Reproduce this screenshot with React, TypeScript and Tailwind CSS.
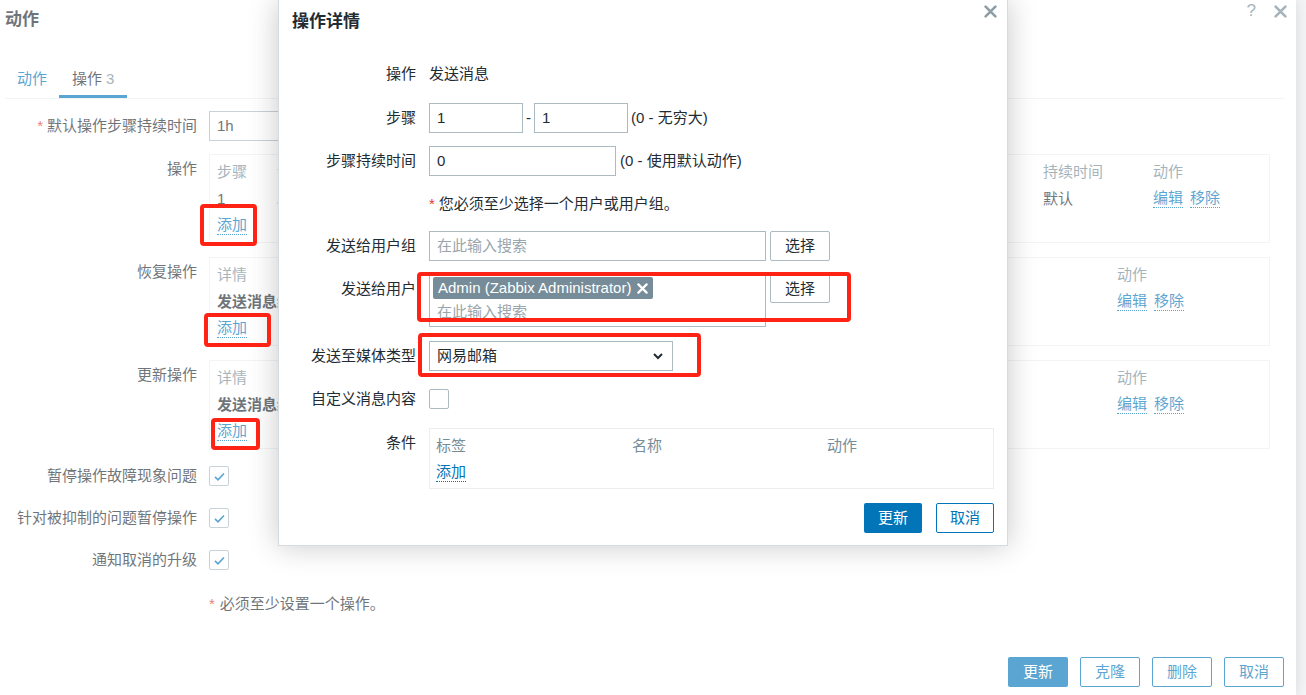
import React from "react";

const Link = ({ children }: { children: React.ReactNode }) => (
  <span className="text-[#0275b8] border-b border-dotted border-[#0275b8] leading-[18px]">{children}</span>
);

const Check = () => (
  <svg viewBox="0 0 20 20" className="w-[15px] h-[15px]">
    <path d="M4 10.5l4 3.8 8-8.3" fill="none" stroke="#0275b8" strokeWidth="2.2" />
  </svg>
);

const Box = ({ checked }: { checked?: boolean }) => (
  <div className="w-[20px] h-[20px] border border-[#acbbc2] rounded-[2px] bg-white flex items-center justify-center">
    {checked && <Check />}
  </div>
);

const Cross = ({ size, color, width }: { size: number; color: string; width: number }) => (
  <svg viewBox="0 0 12 12" width={size} height={size}>
    <path d="M1.5 1.5l9 9M10.5 1.5l-9 9" stroke={color} strokeWidth={width} strokeLinecap="round" />
  </svg>
);

const Red = ({ className }: { className: string }) => (
  <div className={"absolute border-[4px] border-[#ff2316] rounded-[4px] " + className} />
);

const BgRow = ({ label, children, top, star }: { label: string; children: React.ReactNode; top?: boolean; star?: boolean }) => (
  <div className={"flex gap-[12px] " + (top ? "items-start" : "items-center")}>
    <div className={"w-[192px] shrink-0 text-right leading-[20px] " + (top ? "pt-[5px]" : "")}>
      {star && <span className="text-[#e33734] mr-[4px]">*</span>}
      {label}
    </div>
    {children}
  </div>
);

const OpBox = ({ first }: { first?: boolean }) => (
  <div className="w-[1061px] border border-[#ebeef0] px-[7px] pt-[3px] pb-[3px]">
    {first ? (
      <>
        <div className="grid grid-cols-[60px_586px_180px_110px_1fr] h-[27px] items-center text-[#768d99]">
          <span>步骤</span>
          <span>详情</span>
          <span />
          <span>持续时间</span>
          <span>动作</span>
        </div>
        <div className="grid grid-cols-[60px_586px_180px_110px_1fr] h-[27px] items-center">
          <span>1</span>
          <span className="font-bold">发送消息给</span>
          <span />
          <span>默认</span>
          <span className="flex gap-[7px]">
            <Link>编辑</Link>
            <Link>移除</Link>
          </span>
        </div>
      </>
    ) : (
      <>
        <div className="grid grid-cols-[900px_1fr] h-[27px] items-center text-[#768d99]">
          <span>详情</span>
          <span>动作</span>
        </div>
        <div className="grid grid-cols-[900px_1fr] h-[27px] items-center">
          <span className="font-bold">发送消息给</span>
          <span className="flex gap-[7px]">
            <Link>编辑</Link>
            <Link>移除</Link>
          </span>
        </div>
      </>
    )}
    <div className="h-[27px] flex items-center">
      <Link>添加</Link>
    </div>
  </div>
);

const MRow = ({ label, children, top, className }: { label: string; children: React.ReactNode; top?: boolean; className?: string }) => (
  <div className={"flex gap-[13px] " + (top ? "items-start " : "items-center min-h-[30px] ") + (className || "")}>
    <div className={"w-[124px] shrink-0 text-right " + (top ? "leading-[30px]" : "leading-[20px]")}>{label}</div>
    {children}
  </div>
);

const input = "h-[30px] border border-[#acbbc2] bg-white px-[7px] flex items-center";

export default function App() {
  return (
    <div className="relative w-[1306px] h-[695px] overflow-hidden bg-[#eceff1] font-['Liberation_Sans','Noto_Sans_CJK_SC',sans-serif] text-[15px] leading-[20px] text-[#1f2c33]">
      {/* background dialog */}
      <div className="w-[1296px] h-[695px] bg-white shadow-[0_0_12px_rgba(0,0,0,0.18)] flex flex-col pl-[5px] pr-[12px]">
        <div className="h-[40px] flex items-center">
          <span className="font-bold text-[17px]">动作</span>
          <div className="ml-auto self-start mt-[1px] -mr-[3px] flex items-center gap-[18px] text-[#768d99]">
            <span className="text-[17px]">?</span>
            <Cross size={13} color="#768d99" width={2.4} />
          </div>
        </div>
        <div className="mt-[20px] flex border-b border-[#ebeef0]">
          <div className="h-[38px] px-[12px] flex items-center text-[#0275b8]">动作</div>
          <div className="h-[38px] px-[13px] flex items-center border-b-[3px] border-[#0275b8] pt-[3px]">
            操作<span className="ml-[4px] text-[#768d99]">3</span>
          </div>
        </div>

        <div className="mt-[12px]">
          <BgRow label="默认操作步骤持续时间" star>
            <div className={input + " w-[240px]"}>1h</div>
          </BgRow>
        </div>
        <div className="mt-[13px]">
          <BgRow label="操作" top>
            <OpBox first />
          </BgRow>
        </div>
        <div className="mt-[14px]">
          <BgRow label="恢复操作" top>
            <OpBox />
          </BgRow>
        </div>
        <div className="mt-[14px]">
          <BgRow label="更新操作" top>
            <OpBox />
          </BgRow>
        </div>
        <div className="mt-[12px] h-[30px] flex">
          <BgRow label="暂停操作故障现象问题">
            <Box checked />
          </BgRow>
        </div>
        <div className="mt-[12px] h-[30px] flex">
          <BgRow label="针对被抑制的问题暂停操作">
            <Box checked />
          </BgRow>
        </div>
        <div className="mt-[12px] h-[30px] flex">
          <BgRow label="通知取消的升级">
            <Box checked />
          </BgRow>
        </div>
        <div className="mt-[14px] h-[30px] flex items-center pl-[204px]">
          <span className="text-[#e33734] mr-[5px]">*</span>必须至少设置一个操作。
        </div>
        <div className="mt-[38px] flex justify-end gap-[12px]">
          <button className="w-[60px] h-[30px] rounded-[2px] bg-[#0275b8] text-white">更新</button>
          <button className="w-[60px] h-[30px] rounded-[2px] border border-[#0275b8] text-[#0275b8]">克隆</button>
          <button className="w-[60px] h-[30px] rounded-[2px] border border-[#0275b8] text-[#0275b8]">删除</button>
          <button className="w-[60px] h-[30px] rounded-[2px] border border-[#0275b8] text-[#0275b8]">取消</button>
        </div>
      </div>

      {/* fade overlay */}
      <div className="absolute inset-0 bg-white/35" />

      {/* modal */}
      <div className="absolute left-[278px] top-0 w-[730px] bg-white border-l border-r border-b border-[#d5dbde] shadow-[0_0_28px_rgba(0,0,0,0.22)] pl-[13px] pr-[13px] pb-[12px]">
        <div className="h-[44px] flex items-center">
          <span className="font-bold text-[17px]">操作详情</span>
          <div className="ml-auto self-start mt-[5px] -mr-[3px]">
            <Cross size={13} color="#8d9ea7" width={2.4} />
          </div>
        </div>

        <MRow label="操作" className="mt-[15px]">
          <span>发送消息</span>
        </MRow>
        <MRow label="步骤" className="mt-[14px]">
          <div className="flex items-center gap-[3px]">
            <div className={input + " w-[94px] border-[#1c6aa3]"}>1</div>
            <span>-</span>
            <div className={input + " w-[94px]"}>1</div>
            <span>(0 - 无穷大)</span>
          </div>
        </MRow>
        <MRow label="步骤持续时间" className="mt-[13px]">
          <div className="flex items-center gap-[4px]">
            <div className={input + " w-[187px]"}>0</div>
            <span>(0 - 使用默认动作)</span>
          </div>
        </MRow>
        <MRow label="" className="mt-[13px]">
          <span>
            <span className="text-[#e33734] mr-[4px]">*</span>您必须至少选择一个用户或用户组。
          </span>
        </MRow>
        <MRow label="发送给用户组" className="mt-[12px]">
          <div className="flex items-center gap-[4px]">
            <div className={input + " w-[337px] text-[#9aa6ad]"}>在此输入搜索</div>
            <button className="w-[60px] h-[30px] border border-[#acbbc2] rounded-[2px] bg-white">选择</button>
          </div>
        </MRow>
        <MRow label="发送给用户" top className="mt-[13px]">
          <div className="flex items-start gap-[4px]">
            <div className="w-[337px] h-[53px] border border-[#acbbc2] px-[3px] pt-[2px]">
              <div className="inline-flex items-center gap-[6px] h-[22px] px-[5px] rounded-[2px] bg-[#768d99] text-white">
                Admin (Zabbix Administrator)
                <Cross size={11} color="#ffffff" width={2.4} />
              </div>
              <div className="pl-[4px] mt-[3px] text-[#9aa6ad] leading-[20px]">在此输入搜索</div>
            </div>
            <button className="w-[60px] h-[29px] border border-[#acbbc2] rounded-[2px] bg-white">选择</button>
          </div>
        </MRow>
        <MRow label="发送至媒体类型" className="mt-[14px]">
          <div className={input + " w-[244px] justify-between"}>
            <span>网易邮箱</span>
            <svg viewBox="0 0 12 12" className="w-[12px] h-[12px] mr-[1px]">
              <path d="M2 4l4 4 4-4" fill="none" stroke="#1f2c33" strokeWidth="2" />
            </svg>
          </div>
        </MRow>
        <MRow label="自定义消息内容" className="mt-[13px]">
          <Box />
        </MRow>
        <MRow label="条件" top className="mt-[14px]">
          <div className="w-[566px] h-[61px] border border-[#ebeef0] px-[6px] pt-[3px]">
            <div className="grid grid-cols-[196px_195px_1fr] h-[27px] items-center text-[#768d99]">
              <span>标签</span>
              <span>名称</span>
              <span>动作</span>
            </div>
            <div className="h-[27px] flex items-center">
              <Link>添加</Link>
            </div>
          </div>
        </MRow>
        <div className="mt-[14px] flex justify-end gap-[14px]">
          <button className="w-[58px] h-[30px] rounded-[2px] bg-[#0275b8] text-white">更新</button>
          <button className="w-[58px] h-[30px] rounded-[2px] border border-[#0275b8] text-[#0275b8] bg-white">取消</button>
        </div>
      </div>

      {/* annotations */}
      <Red className="left-[200px] top-[204px] w-[57px] h-[42px]" />
      <Red className="left-[204px] top-[313px] w-[67px] h-[34px]" />
      <Red className="left-[211px] top-[418px] w-[49px] h-[32px]" />
      <Red className="left-[417px] top-[272px] w-[434px] h-[50px]" />
      <Red className="left-[418px] top-[333px] w-[283px] h-[44px]" />
    </div>
  );
}
